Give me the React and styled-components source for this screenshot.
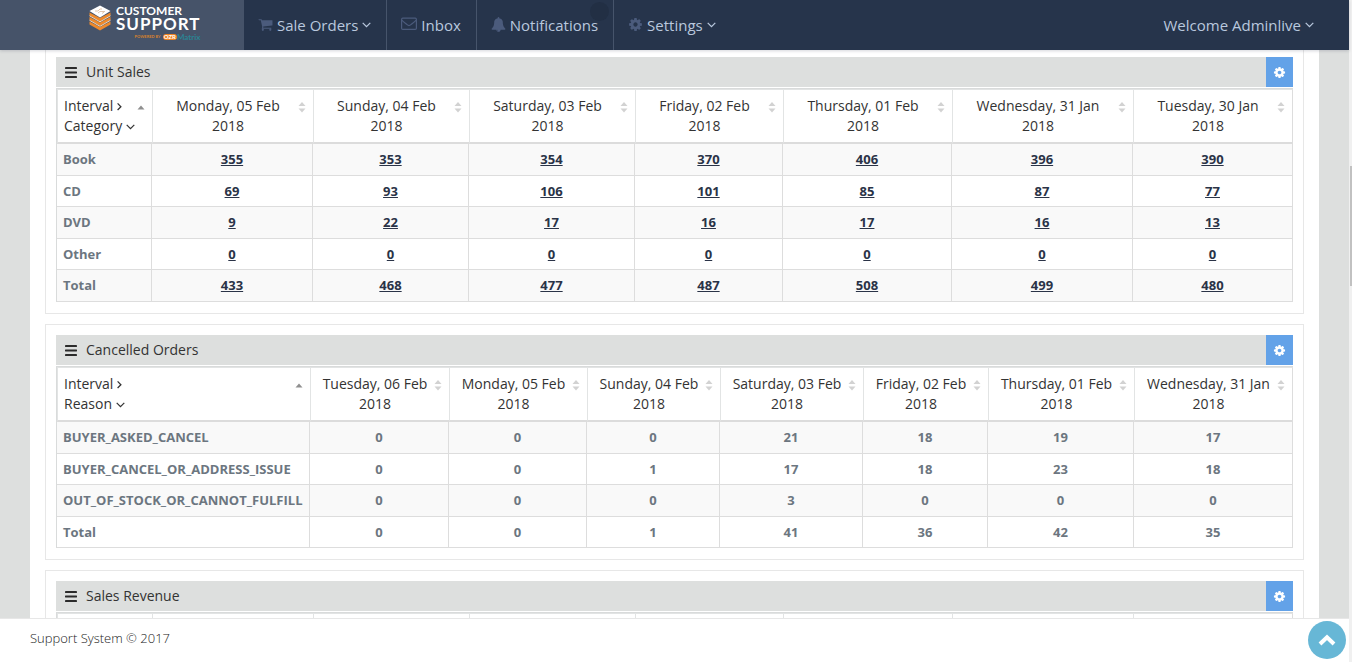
import React from "react";
import styled, { createGlobalStyle, css } from "styled-components";

const GlobalStyle = createGlobalStyle`
  *, *::before, *::after { box-sizing: border-box; }
  body {
    margin: 0;
    background: #dddfde;
    color: #333;
    font-family: "Open Sans", "Noto Sans", sans-serif;
    font-size: 14px;
    line-height: 20px;
  }
  button { font: inherit; color: inherit; border: 0; padding: 0; background: none; cursor: pointer; }
`;

/* ---------- icons ---------- */

const paths = {
  cart: "M704 1536q0 52-38 90t-90 38-90-38-38-90 38-90 90-38 90 38 38 90zm896 0q0 52-38 90t-90 38-90-38-38-90 38-90 90-38 90 38 38 90zm128-1088v512q0 24-16.500 42.500t-40.500 21.500l-1044 122q13 60 13 70 0 16-24 64h920q26 0 45 19t19 45-19 45-45 19h-1024q-26 0-45-19t-19-45q0-11 8-31.500t16-36 21.500-40 15.500-29.500l-177-823h-204q-26 0-45-19t-19-45 19-45 45-19h256q16 0 28.500 6.500t19.500 15.500 13 24.500 8 26 5.500 29.500 4.500 26h1201q26 0 45 19t19 45z",
  bell: "M912 1696q0-16-16-16-59 0-101.500-42.500t-42.500-101.500q0-16-16-16t-16 16q0 73 51.500 124.500t124.500 51.500q16 0 16-16zm816-288q0 52-38 90t-90 38h-448q0 106-75 181t-181 75-181-75-75-181h-448q-52 0-90-38t-38-90q50-42 91-88t85-119.500 74.500-158.500 50-206 19.500-260q0-152 117-282.500t307-158.500q-8-19-8-39 0-40 28-68t68-28 68 28 28 68q0 20-8 39 190 28 307 158.500t117 282.500q0 139 19.500 260t50 206 74.500 158.500 85 119.500 91 88z",
  cog: "M1152 896q0-106-75-181t-181-75-181 75-75 181 75 181 181 75 181-75 75-181zm512-109v222q0 12-8 23t-20 13l-185 28q-19 54-39 91 35 50 107 138 10 12 10 25t-9 23q-27 37-99 108t-94 71q-12 0-26-9l-138-108q-44 23-91 38-16 136-29 186-7 28-36 28h-222q-14 0-24.500-8.500t-11.500-21.500l-28-184q-49-16-90-37l-141 107q-10 9-25 9-14 0-25-11-126-114-165-168-7-10-7-23 0-12 8-23 15-21 51-66.500t54-70.500q-27-50-41-99l-183-27q-13-2-21-12.500t-8-23.500v-222q0-12 8-23t19-13l186-28q14-46 39-92-40-57-107-138-10-12-10-24 0-10 9-23 26-36 98.500-107.500t94.500-71.500q13 0 26 10l138 107q44-23 91-38 16-136 29-186 7-28 36-28h222q14 0 24.500 8.500t11.500 21.500l28 184q49 16 90 37l142-107q9-9 24-9 13 0 25 10 129 119 165 170 7 8 7 22 0 12-8 23-15 21-51 66.500t-54 70.500q26 50 41 98l183 28q13 2 21 12.500t8 23.500z",
};

const Glyph = ({ name, size }) => (
  <svg width={size} height={size} viewBox="0 0 1792 1792" fill="currentColor" aria-hidden="true">
    <path d={paths[name]} />
  </svg>
);

const Envelope = () => (
  <svg width="16" height="14" viewBox="0 0 16 14" fill="none" stroke="currentColor" strokeWidth="1.2" aria-hidden="true">
    <rect x="0.6" y="1.2" width="14.8" height="11.2" rx="1.2" />
    <path d="M0.8 3.2C2.6 5 4.6 6.4 6.400 7.900C7.400 8.700 8.600 8.700 9.600 7.900C11.400 6.400 13.400 5 15.200 3.200" />
  </svg>
);

const AngleDown = () => (
  <svg width="9" height="6" viewBox="0 0 9 6" fill="none" stroke="currentColor" strokeWidth="1.25" aria-hidden="true">
    <path d="M0.7 0.9L4.5 4.700L8.300 0.9" />
  </svg>
);

const AngleRight = () => (
  <svg width="5" height="9" viewBox="0 0 5 9" fill="none" stroke="currentColor" strokeWidth="1.25" aria-hidden="true">
    <path d="M0.6 1.400L3.900 4.700L0.600 8" />
  </svg>
);

const Bars = () => (
  <svg width="12" height="11" viewBox="0 0 12 11" fill="#2b2b2b" aria-hidden="true">
    <rect width="12" height="2" rx="0.4" />
    <rect y="4.500" width="12" height="2" rx="0.4" />
    <rect y="9" width="12" height="2" rx="0.4" />
  </svg>
);

const SortBoth = () => (
  <svg width="8" height="10" viewBox="0 0 8 10" fill="#d2d2d2" aria-hidden="true">
    <path d="M0.500 4L4 0L7.500 4ZM0.500 6.500L4 10.500L7.500 6.500Z" />
  </svg>
);

const SortUp = () => (
  <svg width="8" height="10" viewBox="0 0 8 10" fill="#8f8f8f" aria-hidden="true">
    <path d="M0.500 7.500L4 3.500L7.500 7.500Z" />
  </svg>
);

const LogoMark = () => (
  <svg width="22" height="26" viewBox="0 0 22 26" aria-hidden="true">
    <path d="M0.500 16.500L11 22L21.500 16.500V19.500L11 25.500L0.500 19.500Z" fill="#ee8a2c" />
    <path d="M0.500 12L11 17.500L21.500 12V15L11 21L0.500 15Z" fill="#ee8a2c" />
    <path d="M0.500 7.500L11 13L21.500 7.500V10.500L11 16.500L0.500 10.500Z" fill="#ee8a2c" />
    <path d="M0.500 10.800L11 16.800L21.500 10.800M0.500 15.300L11 21.300L21.500 15.300" fill="none" stroke="#fbe3cb" strokeWidth="0.900" />
    <path d="M11 0.500L21.500 6L11 12.500L0.500 6Z" fill="#fff" />
    <path d="M6 6H9L11 4H13M9 8L11 6.500H16M13 8.500L15 7" fill="none" stroke="#d9b99a" strokeWidth="0.800" />
  </svg>
);

/* ---------- shell ---------- */

const Shell = styled.div`
  display: grid;
  grid-template-columns: 1fr 3px;
  height: 100vh;
`;

const Page = styled.div`
  display: flex;
  flex-direction: column;
  min-width: 0;
  min-height: 0;
`;

const ScrollTrack = styled.div`
  background: #f0f0f0;
  padding: 166px 0 0 1px;
`;

const ScrollThumb = styled.div`
  height: 120px;
  background: #c1c1c1;
`;

const TopBar = styled.header`
  position: relative;
  z-index: 1;
  display: flex;
  flex: none;
  height: 50px;
  background: #26344b;
  color: #b9c8de;
  box-shadow: 0 1px 3px rgba(38, 52, 75, 0.2);
`;

const Brand = styled.a`
  display: flex;
  gap: 5px;
  width: 244px;
  padding: 5px 0 0 89px;
  background: #465369;
  color: #fff;
  text-decoration: none;
  font-family: Lato, sans-serif;
  font-weight: 700;
`;

const BrandWords = styled.span`
  display: flex;
  flex-direction: column;
`;

const BrandTop = styled.span`
  font-size: 12px;
  line-height: 11px;
`;

const BrandMain = styled.span`
  font-size: 17px;
  line-height: 15px;
  letter-spacing: 1px;
`;

const BrandBy = styled.span`
  display: flex;
  align-items: center;
  justify-content: flex-end;
  padding-top: 2px;
  font-size: 4px;
  line-height: 8px;
  color: #d9822b;
`;

const BrandPill = styled.span`
  margin-left: 2px;
  padding: 0 1px;
  border-radius: 3px;
  background: #ee8322;
  color: #fff;
  font-size: 6px;
  line-height: 6px;
`;

const BrandMatrix = styled.span`
  color: #2b8494;
  font-size: 8px;
`;

const Nav = styled.nav`
  display: flex;
  flex: 1;
`;

const navLook = css`
  position: relative;
  display: flex;
  align-items: center;
  gap: 4px;
  font-size: 15px;
  line-height: 20px;
  color: #b9c8de;
  text-decoration: none;
`;

const NavLink = styled.a`
  ${navLook}
  padding: 0 15px 0 14px;
  border-right: 1px solid ${(p) => (p.$last ? "transparent" : "#46546b")};
`;

const UserLink = styled.a`
  ${navLook}
  margin-left: auto;
  padding-right: 35px;
`;

const NavIcon = styled.span`
  display: flex;
  padding-bottom: 2px;
  color: #4b5b7c;
`;

const Badge = styled.span`
  position: absolute;
  top: 2px;
  right: 4px;
  width: 19px;
  height: 19px;
  border-radius: 50%;
  background: #222f44;
`;

const Viewport = styled.main`
  flex: 1;
  min-height: 0;
  overflow: hidden;
  padding: 0 30px;
`;

const PanelStack = styled.div`
  display: flex;
  flex-direction: column;
  gap: 10px;
  margin-top: -4px;
  padding: 0 15px;
  background: #fff;
`;

const Footer = styled.footer`
  display: flex;
  align-items: flex-start;
  justify-content: space-between;
  flex: none;
  height: 44px;
  padding: 2px 3px 0 30px;
  border-top: 1px solid #e7e7e7;
  background: #fff;
  color: #222;
  font-size: 13px;
  font-weight: 300;
  line-height: 34px;
`;

const ToTop = styled.button`
  display: grid;
  place-items: center;
  width: 38px;
  height: 38px;
  border-radius: 50%;
  background: #67b7d6;
  color: #fff;
`;

/* ---------- panels ---------- */

const PanelBox = styled.section`
  padding: 10px 10px 11px;
  border: 1px solid #e7e7e7;
`;

const PanelHead = styled.div`
  display: flex;
  align-items: center;
  gap: 9px;
  height: 30px;
  margin-bottom: 1px;
  padding-left: 9px;
  background: #dddfde;
`;

const PanelTitle = styled.h2`
  flex: 1;
  margin: 0;
  font-size: 14px;
  font-weight: 400;
`;

const GearButton = styled.button`
  display: grid;
  place-items: center;
  width: 27px;
  height: 30px;
  background: #63a2e8;
  color: #fff;
`;

const Table = styled.table`
  width: 100%;
  table-layout: fixed;
  border-collapse: separate;
  border-spacing: 0;
  border: solid #d9dbdb;
  border-width: 1px 0 0 1px;
`;

const Col = styled.col`
  width: ${(p) => p.$w}px;
`;

const HeadCell = styled.th`
  padding: 6px 7px 6px ${(p) => (p.$first ? 6 : 5)}px;
  border: solid #e2e4e4;
  border-width: 1px 0 2px 1px;
  border-bottom-color: #dcdcdc;
  font-weight: 400;
  &:last-child { border-right: 1px solid #ddd; }
`;

const SortButton = styled.button`
  display: flex;
  width: 100%;
  text-align: ${(p) => (p.$first ? "left" : "center")};
`;

const SortLabel = styled.span`
  flex: 1;
`;

const LabelLine = styled.span`
  display: block;
  svg { display: inline-block; vertical-align: ${(p) => (p.$down ? 1 : 0)}px; }
`;

const SortMark = styled.span`
  display: flex;
  padding-top: 6px;
  svg { overflow: visible; }
`;

const BodyRow = styled.tr`
  height: 32px;
  background: #f9f9f9;
  &:nth-child(even) { height: 31px; background: #fff; }
`;

const cellLook = css`
  padding: 5px 6px;
  border: solid #ddd;
  border-width: 0 1px 1px 0;
  font-size: 13px;
  font-weight: 700;
  color: #6c7680;
  vertical-align: top;
`;

const RowName = styled.th`
  ${cellLook}
  text-align: left;
`;

const Cell = styled.td`
  ${cellLook}
  text-align: center;
`;

const CountLink = styled.a`
  color: #2a3347;
  text-decoration: underline;
`;

const unitDays = ["Monday, 05 Feb", "Sunday, 04 Feb", "Saturday, 03 Feb", "Friday, 02 Feb", "Thursday, 01 Feb", "Wednesday, 31 Jan", "Tuesday, 30 Jan"];
const unitCols = [95, 161, 156, 166, 148, 169, 181, 160];

const reports = [
  {
    title: "Unit Sales",
    group: "Category",
    linked: true,
    cols: unitCols,
    days: unitDays,
    rows: [
      ["Book", 355, 353, 354, 370, 406, 396, 390],
      ["CD", 69, 93, 106, 101, 85, 87, 77],
      ["DVD", 9, 22, 17, 16, 17, 16, 13],
      ["Other", 0, 0, 0, 0, 0, 0, 0],
      ["Total", 433, 468, 477, 487, 508, 499, 480],
    ],
  },
  {
    title: "Cancelled Orders",
    group: "Reason",
    cols: [253, 139, 138, 133, 143, 125, 146, 159],
    days: ["Tuesday, 06 Feb", "Monday, 05 Feb", "Sunday, 04 Feb", "Saturday, 03 Feb", "Friday, 02 Feb", "Thursday, 01 Feb", "Wednesday, 31 Jan"],
    rows: [
      ["BUYER_ASKED_CANCEL", 0, 0, 0, 21, 18, 19, 17],
      ["BUYER_CANCEL_OR_ADDRESS_ISSUE", 0, 0, 1, 17, 18, 23, 18],
      ["OUT_OF_STOCK_OR_CANNOT_FULFILL", 0, 0, 0, 3, 0, 0, 0],
      ["Total", 0, 0, 1, 41, 36, 42, 35],
    ],
  },
  { title: "Sales Revenue", group: "Category", cols: unitCols, days: unitDays, rows: [] },
];

function Report({ title, group, linked, cols, days, rows }) {
  return (
    <PanelBox>
      <PanelHead>
        <Bars />
        <PanelTitle>{title}</PanelTitle>
        <GearButton aria-label={`${title} options`}>
          <Glyph name="cog" size={13} />
        </GearButton>
      </PanelHead>
      <Table>
        <colgroup>
          {cols.map((w, i) => <Col key={i} $w={w} />)}
        </colgroup>
        <thead>
          <tr>
            <HeadCell scope="col" $first>
              <SortButton $first>
                <SortLabel>
                  <LabelLine>Interval <AngleRight /></LabelLine>
                  <LabelLine $down>{group} <AngleDown /></LabelLine>
                </SortLabel>
                <SortMark><SortUp /></SortMark>
              </SortButton>
            </HeadCell>
            {days.map((day) => (
              <HeadCell key={day} scope="col">
                <SortButton>
                  <SortLabel>
                    <LabelLine>{day}</LabelLine>
                    <LabelLine>2018</LabelLine>
                  </SortLabel>
                  <SortMark><SortBoth /></SortMark>
                </SortButton>
              </HeadCell>
            ))}
          </tr>
        </thead>
        <tbody>
          {rows.map(([name, ...counts]) => (
            <BodyRow key={name}>
              <RowName scope="row">{name}</RowName>
              {counts.map((n, i) => (
                <Cell key={i}>{linked ? <CountLink href="#">{n}</CountLink> : n}</Cell>
              ))}
            </BodyRow>
          ))}
        </tbody>
      </Table>
    </PanelBox>
  );
}

export default function App() {
  return (
    <Shell>
      <GlobalStyle />
      <Page>
        <TopBar>
          <Brand href="#">
            <LogoMark />
            <BrandWords>
              <BrandTop>CUSTOMER</BrandTop>
              <BrandMain>SUPPORT</BrandMain>
              <BrandBy>
                POWERED BY <BrandPill>OZR</BrandPill>
                <BrandMatrix>Matrix</BrandMatrix>
              </BrandBy>
            </BrandWords>
          </Brand>
          <Nav>
            <NavLink href="#"><NavIcon><Glyph name="cart" size={15} /></NavIcon>Sale Orders<AngleDown /></NavLink>
            <NavLink href="#"><NavIcon><Envelope /></NavIcon>Inbox</NavLink>
            <NavLink href="#"><NavIcon><Glyph name="bell" size={15} /></NavIcon>Notifications<Badge /></NavLink>
            <NavLink href="#" $last><NavIcon><Glyph name="cog" size={15} /></NavIcon>Settings<AngleDown /></NavLink>
            <UserLink href="#">Welcome Adminlive<AngleDown /></UserLink>
          </Nav>
        </TopBar>
        <Viewport>
          <PanelStack>
            {reports.map((r) => <Report key={r.title} {...r} />)}
          </PanelStack>
        </Viewport>
        <Footer>
          <span>Support System © 2017</span>
          <ToTop aria-label="Back to top">
            <svg width="18" height="12" viewBox="0 0 18 12" fill="none" stroke="currentColor" strokeWidth="4" aria-hidden="true">
              <path d="M2 10L9 3.200L16 10" />
            </svg>
          </ToTop>
        </Footer>
      </Page>
      <ScrollTrack><ScrollThumb /></ScrollTrack>
    </Shell>
  );
}
